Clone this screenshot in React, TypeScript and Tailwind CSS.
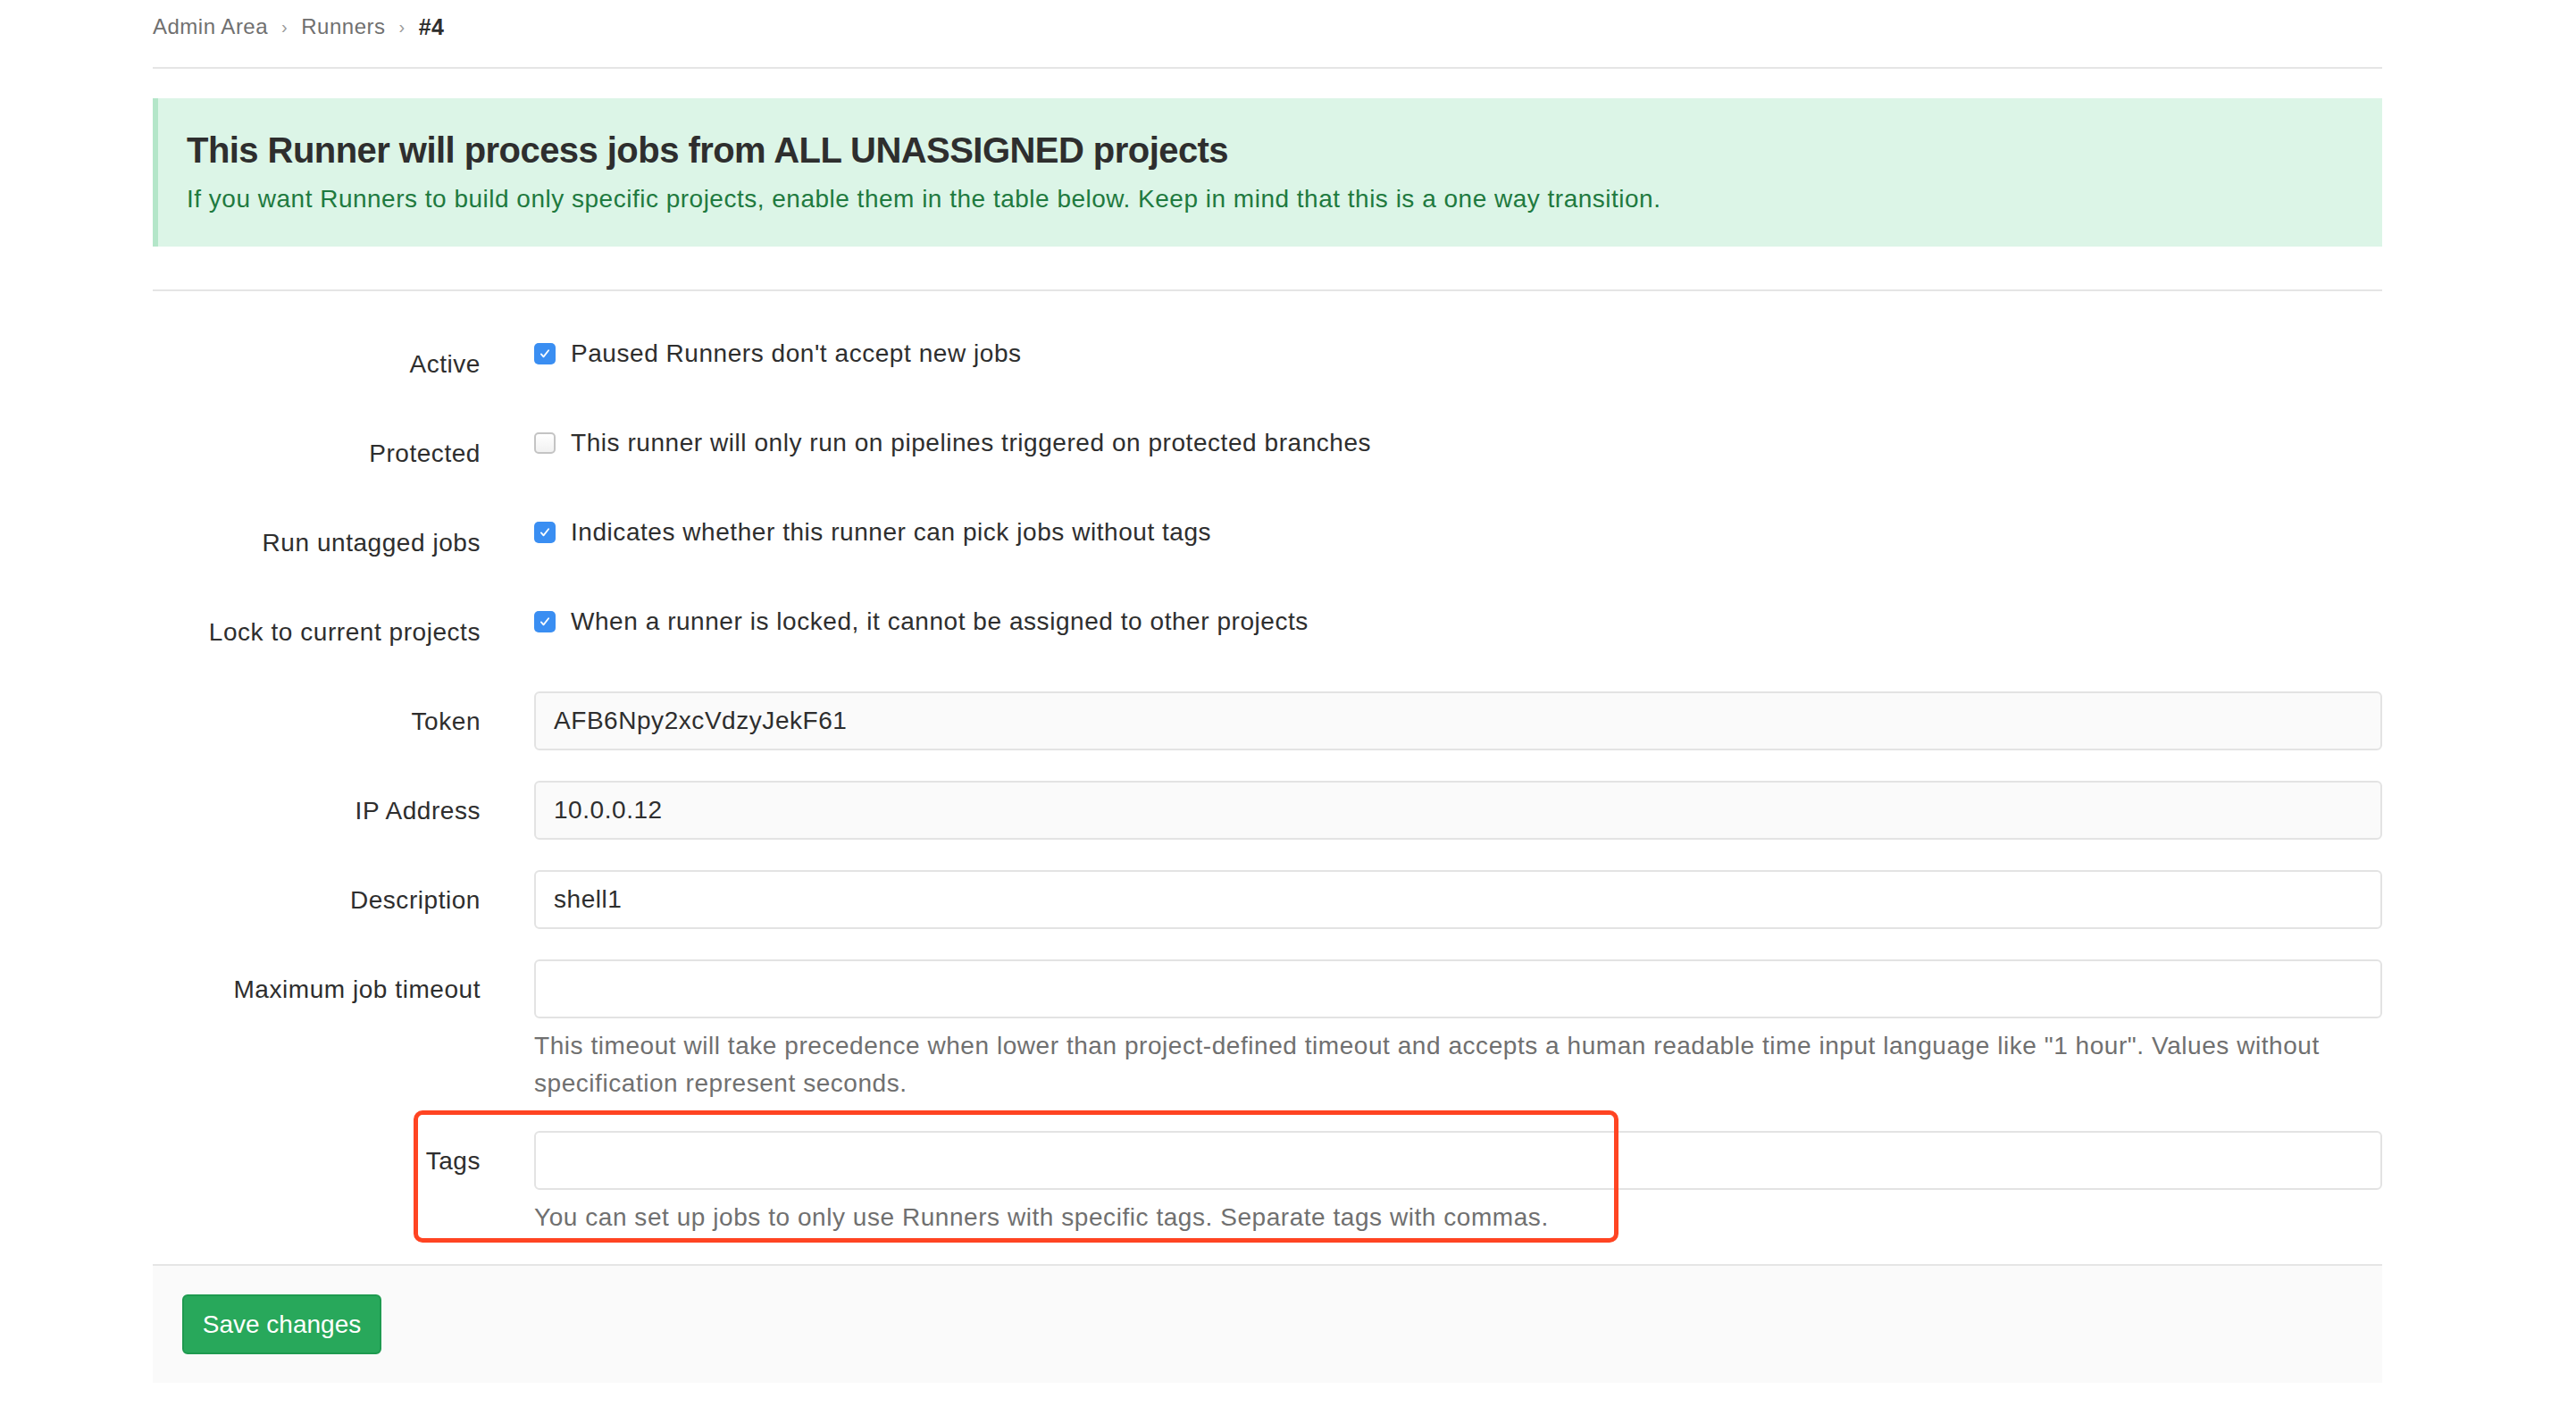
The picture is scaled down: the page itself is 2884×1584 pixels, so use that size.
import type { ReactNode } from 'react';

type CheckRow = {
  label: string;
  text: string;
  checked: boolean;
};

type InputRow = {
  label: string;
  value: string;
  readOnly: boolean;
  help?: string;
};

const checkRows: CheckRow[] = [
  { label: 'Active', text: "Paused Runners don't accept new jobs", checked: true },
  { label: 'Protected', text: 'This runner will only run on pipelines triggered on protected branches', checked: false },
  { label: 'Run untagged jobs', text: 'Indicates whether this runner can pick jobs without tags', checked: true },
  { label: 'Lock to current projects', text: 'When a runner is locked, it cannot be assigned to other projects', checked: true },
];

const inputRows: InputRow[] = [
  { label: 'Token', value: 'AFB6Npy2xcVdzyJekF61', readOnly: true },
  { label: 'IP Address', value: '10.0.0.12', readOnly: true },
  { label: 'Description', value: 'shell1', readOnly: false },
  {
    label: 'Maximum job timeout',
    value: '',
    readOnly: false,
    help: 'This timeout will take precedence when lower than project-defined timeout and accepts a human readable time input language like "1 hour". Values without specification represent seconds.',
  },
];

function Checkbox({ checked }: { checked: boolean }) {
  if (checked) {
    return (
      <span className="flex h-[24px] w-[24px] shrink-0 items-center justify-center rounded-[5px] bg-[#3a8ef2]">
        <svg viewBox="0 0 24 24" className="h-[18px] w-[18px]" fill="none">
          <path d="M6.5 12.5l3.5 4L17.5 7" stroke="white" strokeWidth="2.4" strokeLinecap="round" strokeLinejoin="round" />
        </svg>
      </span>
    );
  }
  return (
    <span className="h-[24px] w-[24px] shrink-0 rounded-[5px] border-2 border-[#c4c4c4] bg-gradient-to-b from-white to-[#f1f1f1]" />
  );
}

function FormRow({ label, children }: { label: string; children: ReactNode }) {
  return (
    <div className="flex">
      <div className="flex h-[68px] w-[367px] shrink-0 items-center justify-end text-[#2e2e2e]">{label}</div>
      <div className="ml-[60px] flex-1">{children}</div>
    </div>
  );
}

export default function App() {
  return (
    <div className="min-h-[1584px] w-full bg-white font-['Liberation_Sans',Arial,sans-serif] text-[28px] leading-[40px] tracking-[0.55px] text-[#2e2e2e]">
      <div className="ml-[171px] w-[2496px]">
        {/* breadcrumb */}
        <div className="h-[77px] border-b-2 border-[#e5e5e5] pt-[12px]">
          <div className="flex items-center gap-[15px] text-[24px] leading-[36px] tracking-[0.5px]">
            <span className="text-[#707070]">Admin Area</span>
            <span className="text-[20px] text-[#9a9a9a]">›</span>
            <span className="text-[#707070]">Runners</span>
            <span className="text-[20px] text-[#9a9a9a]">›</span>
            <span className="text-[25px] font-bold text-[#2e2e2e]">#4</span>
          </div>
        </div>

        {/* info alert */}
        <div className="mt-[33px] h-[166px] border-l-[6px] border-[#b4e6c9] bg-[#dcf5e7] pl-[32px] pt-[34px]">
          <h4 className="text-[40px] font-bold leading-[48px] tracking-[-0.55px] text-[#2e2e2e]">
            This Runner will process jobs from ALL UNASSIGNED projects
          </h4>
          <p className="mt-[11px] tracking-[0.5px] text-[#1f7a3f]">
            If you want Runners to build only specific projects, enable them in the table below. Keep in mind that this is a one way transition.
          </p>
        </div>

        <div className="mt-[48px] border-t-2 border-[#e5e5e5]" />

        <form className="mt-[48px]" onSubmit={(e) => e.preventDefault()}>
          <div className="flex flex-col gap-[32px]">
            {checkRows.map((row) => (
              <FormRow key={row.label} label={row.label}>
                <label className="mt-[2px] flex items-center gap-[17px]">
                  <Checkbox checked={row.checked} />
                  <span>{row.text}</span>
                </label>
              </FormRow>
            ))}

            {inputRows.map((row) => (
              <FormRow key={row.label} label={row.label}>
                <input
                  type="text"
                  defaultValue={row.value}
                  readOnly={row.readOnly}
                  className={`h-[66px] w-full rounded-[6px] border-2 border-[#e3e3e3] px-[20px] text-[28px] text-[#2e2e2e] outline-none ${
                    row.readOnly ? 'bg-[#fafafa]' : 'bg-white'
                  }`}
                />
                {row.help && <p className="mt-[10px] leading-[42px] text-[#707070]">{row.help}</p>}
              </FormRow>
            ))}

            <div className="relative">
              <FormRow label="Tags">
                <input
                  type="text"
                  defaultValue=""
                  className="h-[66px] w-full rounded-[6px] border-2 border-[#e3e3e3] bg-white px-[20px] text-[28px] outline-none"
                />
                <p className="mt-[10px] leading-[42px] text-[#707070]">
                  You can set up jobs to only use Runners with specific tags. Separate tags with commas.
                </p>
              </FormRow>
              {/* annotation box */}
              <div className="pointer-events-none absolute left-[292px] top-[-23px] h-[148px] w-[1349px] rounded-[10px] border-[5px] border-[#ff4422]" />
            </div>
          </div>

          <div className="mt-[31px] h-[133px] border-t-2 border-[#e5e5e5] bg-[#fafafa] pl-[33px] pt-[32px]">
            <button
              type="submit"
              className="h-[67px] w-[223px] rounded-[6px] border-2 border-[#1e9a4f] bg-[#28a85b] text-[28px] tracking-normal text-white"
            >
              Save changes
            </button>
          </div>
        </form>
      </div>
    </div>
  );
}
